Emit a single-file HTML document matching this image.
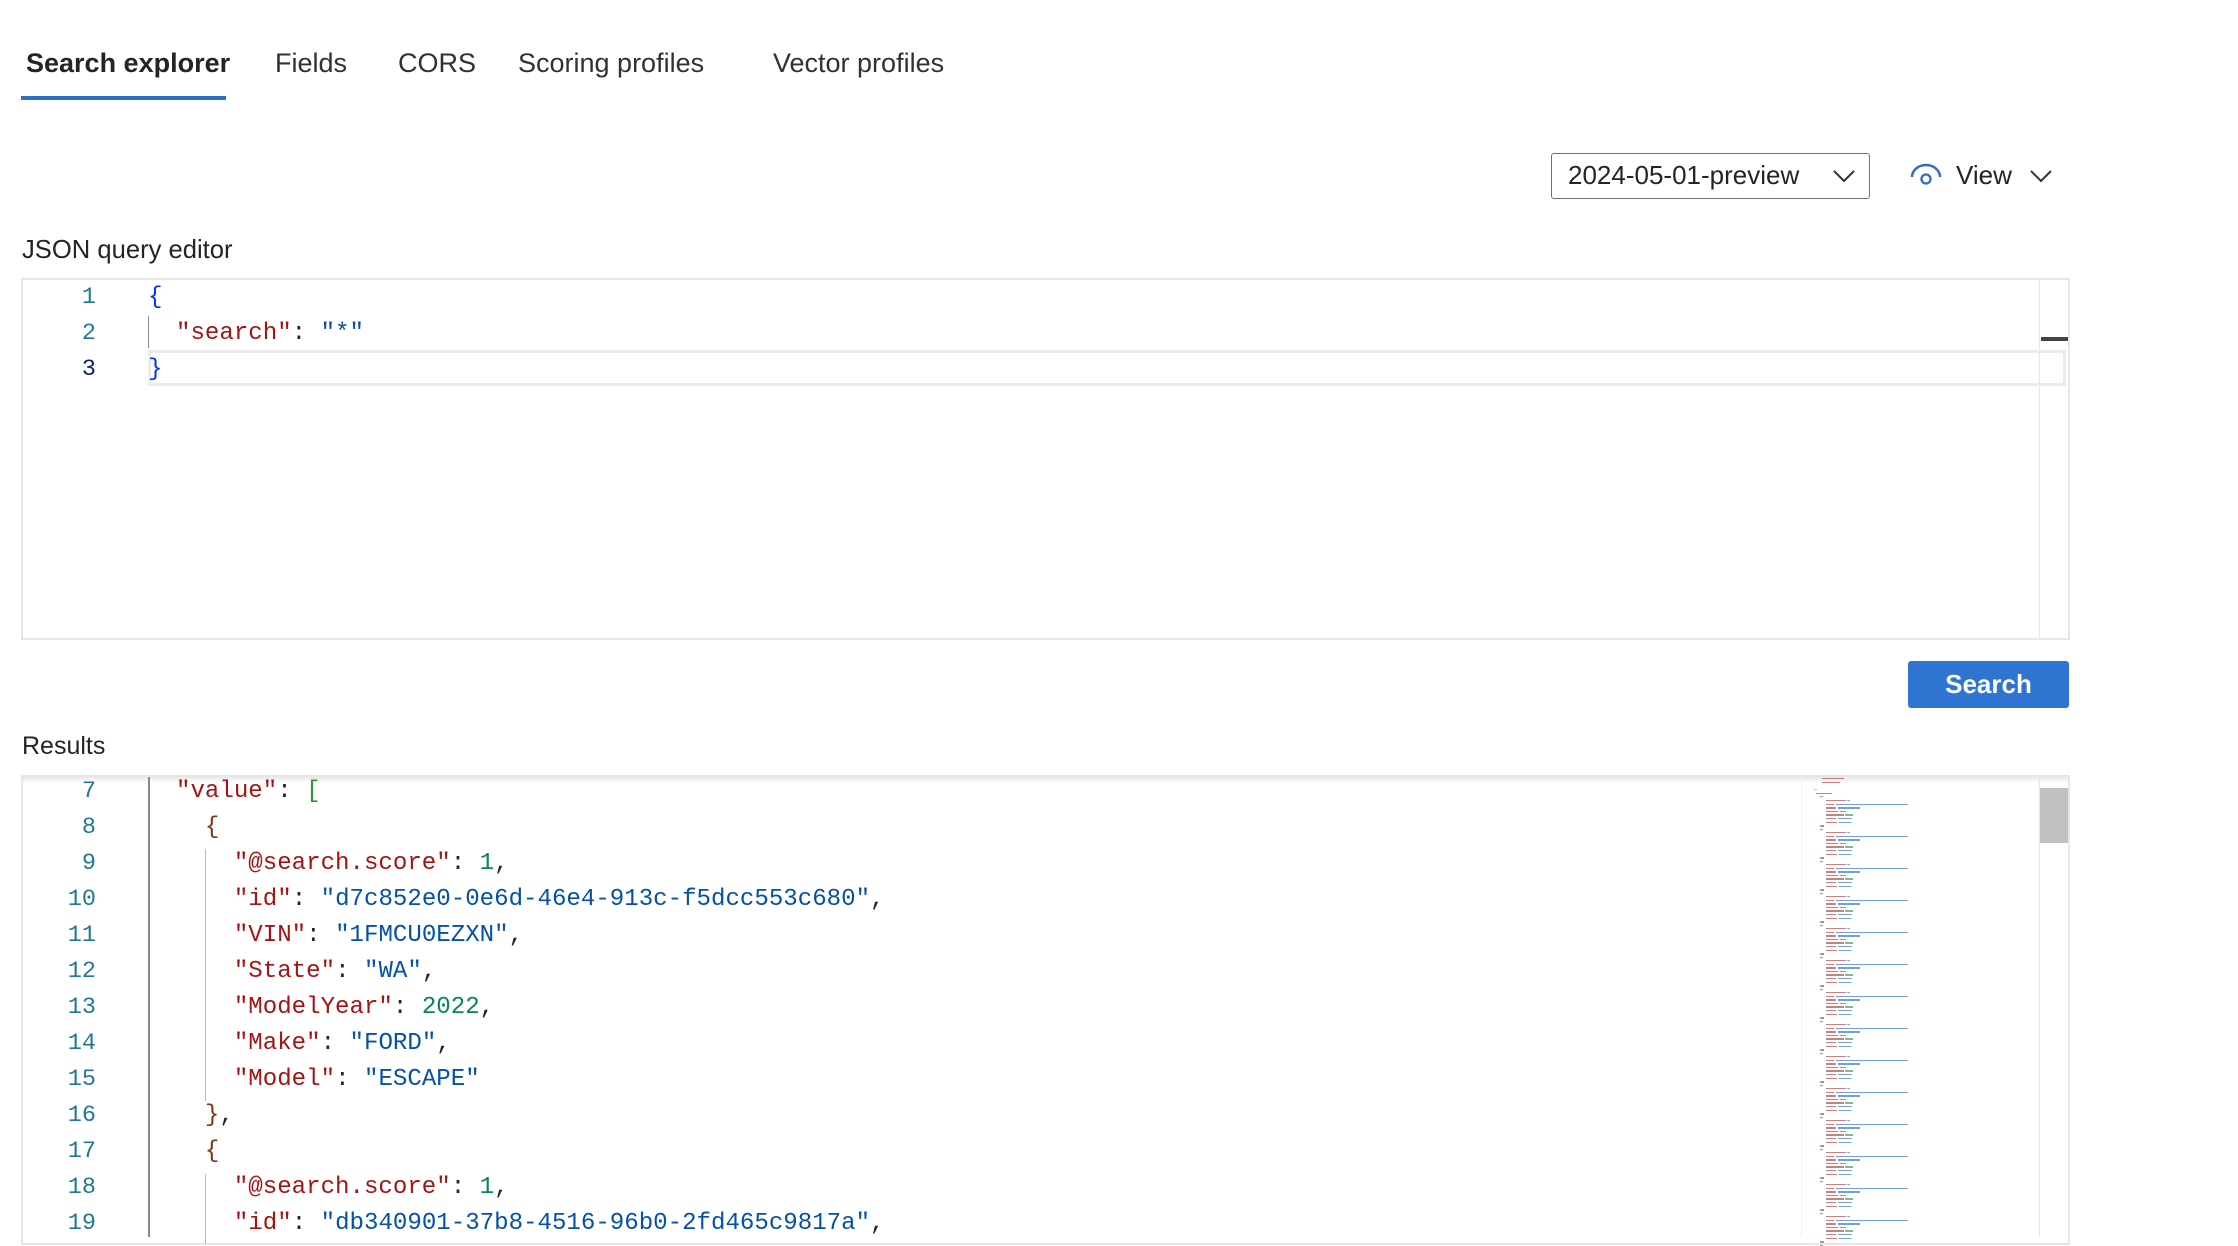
<!DOCTYPE html>
<html><head><meta charset="utf-8"><style>
*{margin:0;padding:0;box-sizing:border-box}
body{width:2238px;height:1236px;overflow:hidden;background:#fff;font-family:"Liberation Sans",sans-serif;color:#242424;position:relative}
.a{position:absolute;white-space:pre}
.tab{font-size:27px;top:48px;color:#323130}
.mono{font-family:"Liberation Mono",monospace;font-size:24.1px;line-height:36px}
.ln{color:#237893;text-align:right;width:60px;left:36px;font-size:23.5px}
.k{color:#a31515}.s{color:#0451a5}.n{color:#098658}.b{color:#0431fa}.g{color:#319331}.br{color:#7b3814}
.mm div{position:absolute;height:1.4px;opacity:.55}
</style></head><body>
<div class="a tab" style="left:26px;color:#242424;font-weight:600">Search explorer</div>
<div class="a tab" style="left:275px">Fields</div>
<div class="a tab" style="left:398px">CORS</div>
<div class="a tab" style="left:518px">Scoring profiles</div>
<div class="a tab" style="left:773px">Vector profiles</div>
<div class="a" style="left:21px;top:96px;width:205px;height:4px;background:#2f6fc4"></div>

<div class="a" style="left:1551px;top:153px;width:319px;height:46px;border:1.5px solid #707070;border-radius:3px"></div>
<div class="a" style="left:1568px;top:160px;font-size:26px">2024-05-01-preview</div>
<svg class="a" style="left:1832px;top:168px" width="24" height="16"><path d="M2 3 L12 13 L22 3" fill="none" stroke="#333" stroke-width="2"/></svg>
<svg class="a" style="left:1909px;top:163px" width="34" height="26"><path d="M3 14 A14 12 0 0 1 31 14" fill="none" stroke="#2f6fc4" stroke-width="2.5"/><circle cx="17" cy="16" r="4.5" fill="none" stroke="#2f6fc4" stroke-width="2.3"/></svg>
<div class="a" style="left:1956px;top:160px;font-size:26px">View</div>
<svg class="a" style="left:2029px;top:168px" width="24" height="16"><path d="M2 3 L12 13 L22 3" fill="none" stroke="#333" stroke-width="2"/></svg>

<div class="a" style="left:22px;top:236px;font-size:25.6px">JSON query editor</div>
<div class="a" style="left:21px;top:278px;width:2049px;height:362px;border:2px solid #e6e6e6"></div>
<div class="a" style="left:2039px;top:280px;width:1px;height:358px;background:#e6e6e6"></div>
<div class="a" style="left:2041px;top:337px;width:27px;height:4px;background:#444"></div>
<div class="a" style="left:148px;top:350px;width:1918px;height:36px;border:3px solid #ececec"></div>
<div class="a" style="left:148px;top:316px;width:1px;height:32px;background:#888"></div>
<div class="a mono ln" style="top:280px">1</div>
<div class="a mono ln" style="top:316px">2</div>
<div class="a mono ln" style="top:352px;color:#0b216f">3</div>
<div class="a mono" style="left:148px;top:280px"><span class="b">{</span></div>
<div class="a mono" style="left:176px;top:316px"><span class="k">"search"</span>: <span class="s">"*"</span></div>
<div class="a mono" style="left:148px;top:352px"><span class="b">}</span></div>

<div class="a" style="left:1908px;top:661px;width:161px;height:47px;background:#2f74d0;border-radius:3px;color:#fff;font-size:26px;font-weight:600;text-align:center;line-height:47px">Search</div>

<div class="a" style="left:22px;top:732px;font-size:25px">Results</div>
<div class="a" style="left:21px;top:775px;width:2049px;height:470px;border:2px solid #e6e6e6;box-shadow:inset 0 6px 6px -4px rgba(0,0,0,.12)"></div>
<div class="a" style="left:148px;top:777px;width:1.5px;height:460px;background:#888"></div>
<div class="a" style="left:205px;top:849px;width:1px;height:252px;background:#bbb"></div>
<div class="a" style="left:205px;top:1174px;width:1px;height:70px;background:#bbb"></div>
<div id="lns"></div>
<div class="a mono" style="left:176px;top:774px"><span class="k">"value"</span>: <span class="g">[</span>
  <span class="br">{</span>
    <span class="k">"@search.score"</span>: <span class="n">1</span>,
    <span class="k">"id"</span>: <span class="s">"d7c852e0-0e6d-46e4-913c-f5dcc553c680"</span>,
    <span class="k">"VIN"</span>: <span class="s">"1FMCU0EZXN"</span>,
    <span class="k">"State"</span>: <span class="s">"WA"</span>,
    <span class="k">"ModelYear"</span>: <span class="n">2022</span>,
    <span class="k">"Make"</span>: <span class="s">"FORD"</span>,
    <span class="k">"Model"</span>: <span class="s">"ESCAPE"</span>
  <span class="br">}</span>,
  <span class="br">{</span>
    <span class="k">"@search.score"</span>: <span class="n">1</span>,
    <span class="k">"id"</span>: <span class="s">"db340901-37b8-4516-96b0-2fd465c9817a"</span>,</div>
<div class="a" style="left:1801px;top:777px;width:1px;height:460px;background:#f0f0f0"></div>
<div class="a" style="left:2039px;top:777px;width:1px;height:460px;background:#e6e6e6"></div>
<div class="a" style="left:2040px;top:788px;width:28px;height:55px;background:#c1c1c1"></div>
<div class="a mm" id="mm" style="left:0;top:0"></div>
<script>
var h='';for(var i=7;i<=19;i++){h+='<div class="a mono ln" style="top:'+(774+(i-7)*36)+'px">'+i+'</div>'}
document.getElementById('lns').innerHTML=h;
var m='';function L(x,y,w,c){m+='<div style="left:'+x+'px;top:'+y+'px;width:'+w+'px;background:'+c+'"></div>'}
L(1822,778,22,'#a31515');L(1822,781.5,18,'#a31515');L(1814,789,3,'#888');L(1816,792.5,16,'#a31515');L(1820,796,3,'#7b3814');
for(var r=0;r<14;r++){var y=800+r*32;
L(1826,y,20,'#a31515');L(1847,y,3,'#098658');
L(1826,y+3.6,8,'#a31515');L(1836,y+3.6,72,'#0451a5');
L(1826,y+7.2,10,'#a31515');L(1838,y+7.2,22,'#0451a5');
L(1826,y+10.8,12,'#a31515');L(1840,y+10.8,6,'#0451a5');
L(1826,y+14.4,18,'#a31515');L(1845,y+14.4,8,'#098658');
L(1826,y+18,10,'#a31515');L(1838,y+18,14,'#0451a5');
L(1826,y+21.6,11,'#a31515');L(1839,y+21.6,12,'#0451a5');
L(1820,y+25.2,4,'#7b3814');L(1820,y+28.8,3,'#7b3814');}
document.getElementById('mm').innerHTML=m;
</script>
</body></html>
